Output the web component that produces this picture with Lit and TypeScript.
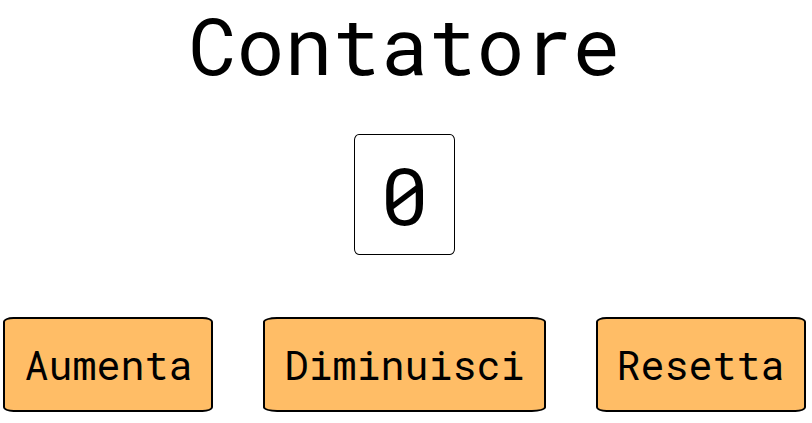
import { LitElement, html, css } from "lit";
import { customElement, state } from "lit/decorators.js";

@customElement("app-root")
export class AppRoot extends LitElement {
  static styles = css`
    :host {
      display: block;
      background: #fff;
      color: #000;
      font-family: "Roboto Mono", "DejaVu Sans Mono", "Liberation Mono", monospace;
    }
    main {
      display: flex;
      flex-direction: column;
      align-items: center;
      padding-right: 3px;
    }
    h1 {
      margin: 0 0 46px;
      font-size: 80px;
      font-weight: 400;
      line-height: 88px;
    }
    .value {
      display: block;
      box-sizing: border-box;
      padding: 12px 25px;
      border: 1px solid #000;
      border-radius: 5%;
      font-size: 80px;
      line-height: 95px;
    }
    .actions {
      display: flex;
      justify-content: center;
      gap: 50px;
      margin-top: 62px;
    }
    button {
      padding: 19px;
      border: 2px solid #000;
      border-radius: 5%;
      background: #ffbd66;
      color: #000;
      font-family: inherit;
      font-size: 40px;
      line-height: 53px;
      cursor: pointer;
    }
  `;

  @state() private count = 0;

  render() {
    return html`
      <main>
        <h1>Contatore</h1>
        <output class="value">${this.count}</output>
        <div class="actions">
          <button type="button" @click=${() => this.count++}>Aumenta</button>
          <button type="button" @click=${() => this.count--}>Diminuisci</button>
          <button type="button" @click=${() => (this.count = 0)}>Resetta</button>
        </div>
      </main>
    `;
  }
}
